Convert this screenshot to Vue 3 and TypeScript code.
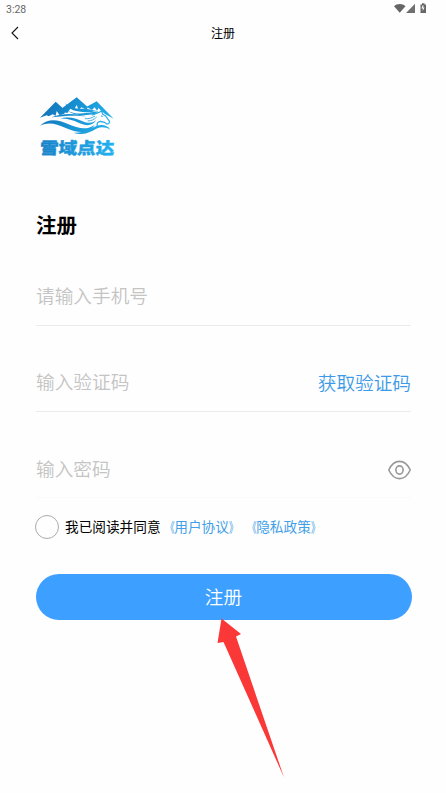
<script setup lang="ts">
import { ref } from 'vue'

const phone = ref('')
const code = ref('')
const password = ref('')
const visible = ref(false)
const agreed = ref(false)
const policies = ['用户协议', '隐私政策']
</script>

<template>
  <div class="page">
    <div class="status">
      <span class="time">3:28</span>
      <svg class="signals" width="34" height="12" viewBox="0 0 34 12">
        <path d="M0 3.2C3 .3 8.5 .3 11.500 3.200L5.750 9.800Z" fill="#666" />
        <path d="M21 .8V10H12Z" fill="#707070" />
        <path d="M26.500 1.500h1.500V.3h2.500v1.200h1.500V10H26.500Z" fill="#666" />
        <path d="M28.500 2.500l-1 3h1.500l-.5 3 2-4H29l.8-2" fill="#fff" />
      </svg>
    </div>
    <header class="nav">
      <svg class="back" width="10" height="14" viewBox="0 0 10 14">
        <path d="M8 1L2 7l6 6" fill="none" stroke="#111" stroke-width="1.100" />
      </svg>
      <span class="nav-title">注册</span>
    </header>
    <main class="content">
      <svg class="logo" width="100" height="80" viewBox="0 0 300 240">
        <defs>
          <linearGradient id="brand" gradientUnits="userSpaceOnUse" x1="30" y1="60" x2="250" y2="150">
            <stop offset="0" stop-color="#1272b6" />
            <stop offset=".5" stop-color="#1895d6" />
            <stop offset="1" stop-color="#28b6f0" />
          </linearGradient>
          <linearGradient id="word" gradientUnits="userSpaceOnUse" x1="30" y1="0" x2="254" y2="0">
            <stop offset="0" stop-color="#1680c6" />
            <stop offset="1" stop-color="#22b0ef" />
          </linearGradient>
        </defs>
        <!-- Snow ridges -->
        <g fill="url(#brand)">
          <path d="M30 98L77 50L98 69L107 76L103 86L89 91L80 78L77 92L68 88L56 94L50 91Z" />
          <path d="M84 65L94 71L140 37L174 67L169 74L154 67L146 76L140 60L132 74L122 70L112 84L101 82L95 88Z" />
          <path d="M170 65L200 49L251 101L226 88L213 77L206 69L201 77L194 67L186 75L177 70Z" />
        </g>
        <!-- Mane, head and neck of the galloping horse -->
        <g fill="url(#brand)">
          <path d="M105 55C119 68 139 73 170 71L199 78L184 81C144 83 119 78 105 55Z" />
          <path d="M113 77C134 88 158 87 184 82L205 79L193 88C159 93 131 91 113 77Z" />
          <path d="M64 97C104 82 140 87 169 94C144 91 105 91 64 97Z" />
        </g>
        <path d="M187 89L211 81L219 91L237 112L229 117L221 111C203 107 198 114 200 125L190 114L174 109L194 101L178 98Z" fill="#fefefe" />
        <g fill="none" stroke="url(#brand)" stroke-linecap="round" stroke-linejoin="round">
          <path d="M187 90C195 89 200 84 205 83L215 78L218 88L227 93L239 110L236 116L230 117L224 112L211 109C202 110 199 116 203 127" stroke-width="3.500" />
          <path d="M194 94C184 99 178 102 166 101M199 97C192 104 184 108 174 108" stroke-width="2.500" />
          <path d="M214 93l3 1" stroke-width="3" />
        </g>
        <!-- Flowing snow -->
        <g fill="url(#brand)">
          <path d="M30 122C54 100 82 103 114 117C146 131 171 136 195 119C174 149 143 144 109 130C75 115 56 111 30 122Z" />
          <path d="M88 101C119 92 140 101 158 109C174 116 187 115 199 106C185 126 166 122 147 114C128 105 110 100 88 101Z" />
          <path d="M131 143C160 146 180 131 199 123C216 117 233 121 241 134C227 126 213 125 202 130C181 141 163 154 131 143Z" />
        </g>
        <text class="wordmark" x="40" y="207" textLength="223" lengthAdjust="spacingAndGlyphs" fill="url(#word)" stroke="url(#word)" stroke-width="1.200" transform="skewX(-3)">雪域点达</text>
      </svg>
      <h1>注册</h1>
      <form @submit.prevent>
        <div class="field"><input v-model="phone" type="tel" placeholder="请输入手机号" /></div>
        <div class="field">
          <input v-model="code" placeholder="输入验证码" />
          <button class="code" type="button">获取验证码</button>
        </div>
        <div class="field faint">
          <input v-model="password" :type="visible ? 'text' : 'password'" placeholder="输入密码" />
          <button class="eye" type="button" @click="visible = !visible">
            <svg width="23" height="20" viewBox="0 0 23 20" fill="none" stroke="#999" stroke-width="1.600">
              <path d="M.8 10C6-1.500 17-1.500 22.200 10C17 21.500 6 21.500 .8 10Z" />
              <ellipse cx="11.500" cy="10" rx="3.600" ry="4.100" />
            </svg>
          </button>
        </div>
        <div class="agreement">
          <button type="button" class="radio" :class="{ checked: agreed }" @click="agreed = !agreed"></button>
          <span>我已阅读并同意</span>
          <a v-for="name in policies" :key="name"><i class="open">《</i>{{ name }}<i class="close">》</i></a>
        </div>
        <button class="submit" type="submit">注册</button>
      </form>
    </main>
    <svg class="pointer" width="70" height="162" viewBox="0 0 70 162">
      <path d="M5.500 2.500L25 18 20 20.500 68 161.500 7.500 26 1.500 27Z" fill="#fb3838" />
    </svg>
  </div>
</template>

<style>
body {
  margin: 0;
  background: #fefefe;
}
</style>

<style scoped>
.page {
  position: relative;
  height: 793px;
  overflow: hidden;
  background: #fefefe;
  color: #000;
  font-family: Roboto, "Noto Sans CJK SC", sans-serif;
}
.status {
  height: 18px;
  display: flex;
  align-items: center;
  justify-content: space-between;
  padding: 0 18px 0 6px;
  box-sizing: border-box;
}
.time {
  font-size: 10.500px;
  color: #666;
}
.signals {
  margin-top: -1px;
}
.nav {
  height: 30px;
  display: grid;
  grid-template-columns: 40px 1fr 40px;
  align-items: center;
}
.back {
  margin-left: 10px;
}
.nav-title {
  padding-bottom: 2px;
  text-align: center;
  font-size: 12px;
}
.content {
  padding: 37px 35px 0 36px;
}
.logo {
  display: block;
  margin-left: -6px;
}
.wordmark {
  font: 900 49px "Noto Sans CJK SC", sans-serif;
}
h1 {
  margin: 47px 0 0;
  height: 28px;
  line-height: 28px;
  font-size: 20.500px;
  font-weight: 700;
}
button {
  border: 0;
  padding: 0;
  background: none;
  font-family: inherit;
}
.field {
  display: flex;
  align-items: center;
  box-sizing: border-box;
  height: 58px;
  margin-top: 28px;
  border-bottom: 1px solid #ebebeb;
}
.faint {
  padding-top: 2px;
  border-color: #fafafa;
}
input {
  flex: 1;
  min-width: 0;
  padding: 0;
  border: 0;
  outline: 0;
  background: none;
  font-family: inherit;
  font-size: 18.670px;
  font-weight: 350;
}
input::placeholder {
  color: #c4c4c4;
}
.code {
  padding-bottom: 2px;
  font-size: 18.670px;
  font-weight: 350;
  color: #3d9ae8;
}
.eye {
  height: 20px;
}
.eye svg {
  display: block;
}
.agreement {
  display: flex;
  align-items: center;
  height: 24px;
  margin-top: 17px;
  font-size: 13.670px;
}
.agreement span,
.agreement a {
  padding-bottom: 2px;
  white-space: nowrap;
}
.agreement a {
  color: #439ee8;
}
.agreement i {
  display: inline-block;
  width: 1em;
  font-style: normal;
}
.open {
  transform: scaleX(.65);
  transform-origin: right;
}
.close {
  transform: scaleX(.65);
  transform-origin: left;
}
.radio {
  width: 24px;
  height: 24px;
  box-sizing: border-box;
  margin: 0 6px 0 -1px;
  border: 1px solid #aaa;
  border-radius: 50%;
}
.checked {
  background: #3d9fff;
}
.submit {
  display: block;
  width: 376px;
  height: 46px;
  margin: 35px 0 0 -.5px;
  padding-bottom: 3px;
  border-radius: 23px;
  background: #3d9fff;
  color: #fff;
  font-size: 18.670px;
  font-weight: 350;
}
.pointer {
  position: absolute;
  left: 216px;
  top: 616px;
  pointer-events: none;
}
</style>
